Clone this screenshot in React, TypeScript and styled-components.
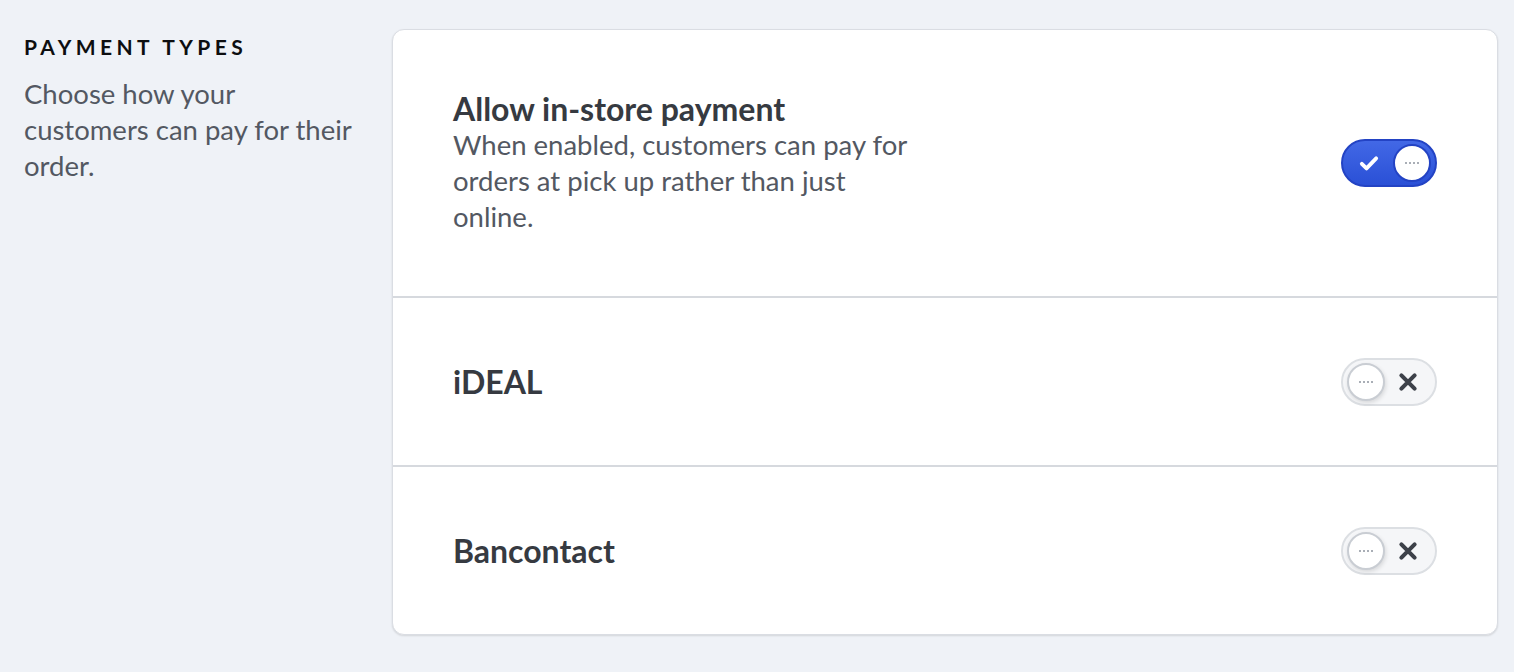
import styled, { createGlobalStyle } from "styled-components";

const Global = createGlobalStyle`
  html, body {
    margin: 0;
    padding: 0;
    background: #eff2f7;
    font-family: Lato, "Open Sans", sans-serif;
  }
`;

type Method = {
  name: string;
  description?: string;
  enabled: boolean;
};

const methods: Method[] = [
  {
    name: "Allow in-store payment",
    description:
      "When enabled, customers can pay for orders at pick up rather than just online.",
    enabled: true,
  },
  { name: "iDEAL", enabled: false },
  { name: "Bancontact", enabled: false },
];

function Toggle({ on }: { on: boolean }) {
  return (
    <Switch $on={on}>
      {on ? (
        <Mark viewBox="0 0 16 16">
          <path
            d="M2.8 8.6l3.4 3.3L13.2 4.6"
            fill="none"
            stroke="#fff"
            strokeWidth="2.8"
            strokeLinecap="round"
            strokeLinejoin="round"
          />
        </Mark>
      ) : null}
      <Knob $on={on}>
        <Dots />
      </Knob>
      {!on ? (
        <Mark viewBox="0 0 16 16">
          <path
            d="M3.2 3.2l9.6 9.6M12.8 3.2l-9.6 9.6"
            fill="none"
            stroke="#3d4149"
            strokeWidth="3"
            strokeLinecap="round"
          />
        </Mark>
      ) : null}
    </Switch>
  );
}

export default function App() {
  return (
    <>
      <Global />
      <Page>
        <Side>
          <Heading>PAYMENT TYPES</Heading>
          <SideText>Choose how your customers can pay for their order.</SideText>
        </Side>
        <Card>
          {methods.map((m) => (
            <Row key={m.name} $tall={!!m.description}>
              <Info>
                <Title>{m.name}</Title>
                {m.description ? <Desc>{m.description}</Desc> : null}
              </Info>
              <Toggle on={m.enabled} />
            </Row>
          ))}
        </Card>
      </Page>
    </>
  );
}

const Page = styled.div`
  display: flex;
  align-items: flex-start;
  gap: 28px;
  padding: 29px 16px 37px 24px;
`;

const Side = styled.div`
  width: 340px;
  flex-shrink: 0;
  padding-top: 5px;
`;

const Heading = styled.div`
  font-size: 21px;
  font-weight: 700;
  letter-spacing: 4.4px;
  color: #0d0e10;
  line-height: 26px;
`;

const SideText = styled.p`
  margin: 16px 0 0;
  font-size: 27.5px;
  line-height: 36px;
  color: #535862;
`;

const Card = styled.div`
  flex: 1;
  background: #fff;
  border-radius: 12px;
  border: 1px solid #dadde3;
  box-shadow: 0 1px 2px rgba(0, 0, 0, 0.12);
  overflow: hidden;
`;

const Row = styled.div<{ $tall: boolean }>`
  display: flex;
  align-items: center;
  justify-content: space-between;
  min-height: 169px;
  padding: ${(p) => (p.$tall ? "61px" : "0")} 60px;
  box-sizing: border-box;
  & + & {
    border-top: 2px solid #d6d9de;
  }
`;

const Info = styled.div`
  max-width: 466px;
`;

const Title = styled.div`
  font-size: 32px;
  font-weight: 700;
  line-height: 36px;
  color: #363a41;
`;

const Desc = styled.div`
  font-size: 27.5px;
  line-height: 36px;
  color: #535862;
`;

const Switch = styled.div<{ $on: boolean }>`
  width: 96px;
  height: 48px;
  box-sizing: border-box;
  border-radius: 24px;
  display: flex;
  align-items: center;
  justify-content: space-between;
  padding: 0 ${(p) => (p.$on ? "4px" : "16px")} 0 ${(p) => (p.$on ? "15px" : "4px")};
  flex-shrink: 0;
  background: ${(p) =>
    p.$on ? "linear-gradient(180deg, #4268e6 0%, #2a50d6 100%)" : "#f5f6f8"};
  border: 2px solid ${(p) => (p.$on ? "#2343c4" : "#dcdfe3")};
`;

const Mark = styled.svg`
  width: 22px;
  height: 22px;
`;

const Knob = styled.div<{ $on: boolean }>`
  width: 38px;
  height: 38px;
  box-sizing: border-box;
  border-radius: 50%;
  background: #fff;
  display: flex;
  align-items: center;
  justify-content: center;
  border: 2px solid ${(p) => (p.$on ? "#2343c4" : "#c9cdd3")};
  box-shadow: ${(p) => (p.$on ? "none" : "1px 2px 4px rgba(0,0,0,0.12)")};
`;

const Dots = styled.div`
  width: 16px;
  height: 2px;
  background-image: radial-gradient(circle, #a9aeb6 1px, transparent 1.2px);
  background-size: 4px 2px;
`;
